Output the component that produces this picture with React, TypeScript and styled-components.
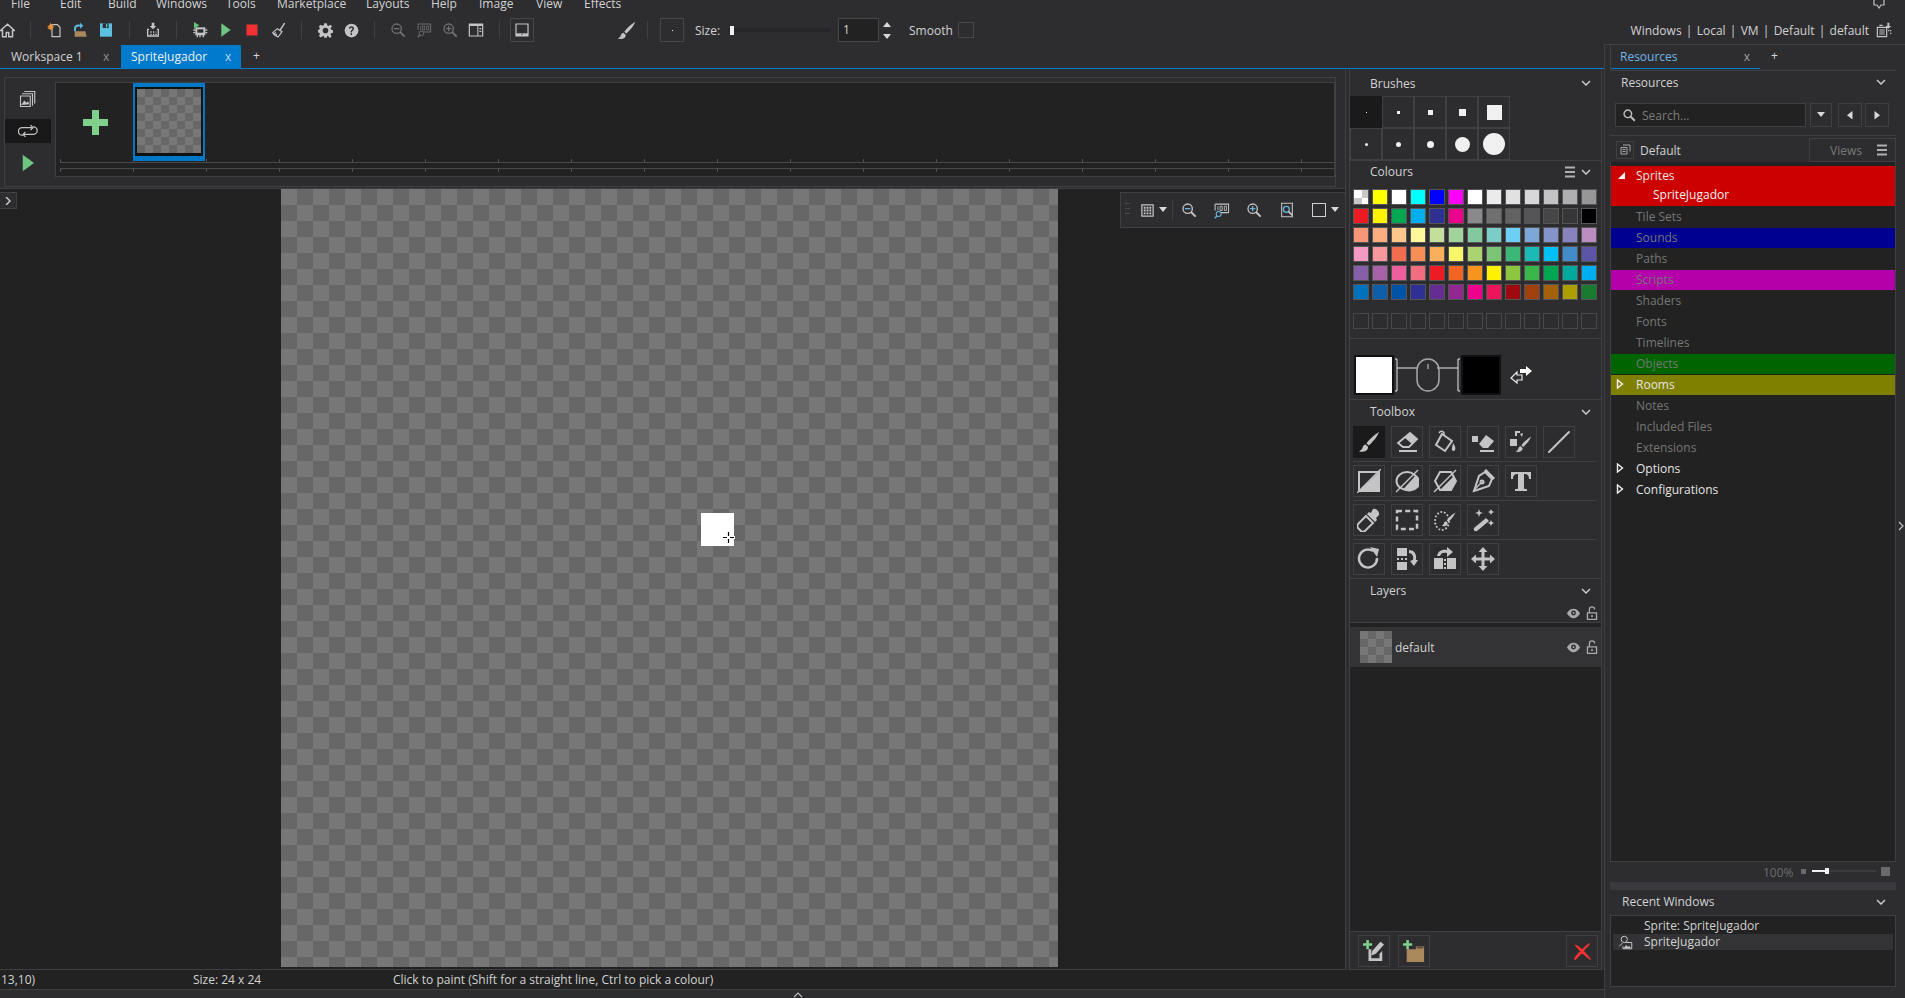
import React from "react";
import styled, { createGlobalStyle } from "styled-components";

const GlobalStyle = createGlobalStyle`
  html, body { margin: 0; padding: 0; background: #2d2d30; overflow: hidden; }
  * { box-sizing: border-box; }
`;

const LINE = "#3f3f44";
const PANEL = "#2d2d30";
const DARK = "#222222";
const TEXT = "#d2d2d2";
const GREY = "#c4c4c4";

const checker = (size: number) => `
  background: conic-gradient(#676767 25%, #777777 0 50%, #676767 0 75%, #777777 0) 0 0 / ${size * 2}px ${size * 2}px;
`;

/* ---------- icons ---------- */

type IconProps = { size?: number; children: React.ReactNode; box?: number };
const Svg = ({ size = 16, box = 24, children }: IconProps) => (
	<svg width={size} height={size} viewBox={`0 0 ${box} ${box}`} style={{ display: "block" }}>
		{children}
	</svg>
);

const BrushShape = ({ fill = GREY }: { fill?: string }) => (
	<path fill={fill} d="M22 2C17 5 12 9.500 9.500 13.500L11.800 15.500C15 12.500 20 7.500 22 2ZM8.500 14.500C5.500 15 6 18 4.500 19.500C3.800 20.200 2.800 20.800 2 21.200C5.500 22.500 11.500 21.500 11 16.800Z" />
);

const MagnifierShape = ({ sign, color = "#6f6f6f", accent = "#6f6f6f" }: { sign: "-" | "+"; color?: string; accent?: string }) => (
	<g fill="none" stroke={color} strokeWidth="2">
		<circle cx="10" cy="10" r="7" />
		<path d="M15 15l7 7" strokeWidth="3" />
		<path d={sign === "-" ? "M6 10h8" : "M6 10h8M10 6v8"} stroke={accent} />
	</g>
);

const Zoom100Shape = ({ color = "#6f6f6f", accent = "#6f6f6f" }: { color?: string; accent?: string }) => (
	<g fill="none" strokeWidth="1.500">
		<path d="M3 3h19v12H11" stroke={color} />
		<path d="M3 3v9" stroke={color} />
		<path d="M7 6v6M10 6h3v6h-3zM16 6h3v6h-3z" stroke={color} strokeWidth="1.200" />
		<circle cx="8" cy="17" r="3.500" stroke={accent} />
		<path d="M5.500 20l-3 3" stroke={accent} strokeWidth="2" />
	</g>
);

const Plus = ({ size = 25 }: { size?: number }) => (
	<svg width={size} height={size} viewBox="0 0 25 25" style={{ display: "block" }}>
		<path fill="#7ed08c" d="M9 0h7v9h9v7h-9v9H9v-9H0V9h9z" />
	</svg>
);

const Eye = () => (
	<Svg size={15} box={16}>
		<path fill="#a8a8a8" d="M1 8C3 4.500 5.500 3 8 3s5 1.500 7 5c-2 3.500-4.500 5-7 5s-5-1.500-7-5z" />
		<circle cx="8" cy="7.500" r="2.600" fill="#2d2d30" />
		<circle cx="8" cy="7.500" r="1" fill="#a8a8a8" />
	</Svg>
);

const Lock = () => (
	<Svg size={14} box={16}>
		<path fill="none" stroke="#a8a8a8" strokeWidth="1.500" d="M5 7V4a3 3 0 0 1 6 0M2.800 7.800h10.400v7.400H2.800z" />
		<rect x="7" y="10.500" width="2" height="2" fill="#a8a8a8" />
	</Svg>
);

const Chevron = () => (
	<svg width="10" height="6" viewBox="0 0 10 6" style={{ display: "block" }}>
		<path d="M1 1l4 4 4-4" fill="none" stroke="#c8c8c8" strokeWidth="1.500" />
	</svg>
);

const Hamburger = () => (
	<svg width="12" height="12" viewBox="0 0 12 12" style={{ display: "block" }}>
		<path d="M1 1.500h10M1 6h10M1 10.500h10" stroke="#b0b0b0" strokeWidth="2" />
	</svg>
);

const Caret = ({ dir = "down" }: { dir?: "down" | "up" | "left" | "right" }) => {
	const d = { down: "M0 1h8L4 6z", up: "M0 6h8L4 1z", left: "M6.500 0v8.500L1 4.250z", right: "M1.500 0v8.500l5.500-4.250z" }[dir];
	return (
		<svg width="8" height="9" viewBox="0 0 8 9" style={{ display: "block" }}>
			<path d={d} fill="#d8d8d8" />
		</svg>
	);
};

const toolbarIcons: Record<string, React.ReactNode> = {
	new: (
		<Svg>
			<path d="M9 4h8l4 4v14H9z" fill="none" stroke={GREY} strokeWidth="1.800" />
			<path d="M7 1l1.200 3 3-1-1.500 3 3 1.500-3 1 1 3-3-1.500L6 13l-.7-3-3.300.5L4 8 1.500 6l3-.5z" fill="#e8913a" />
		</Svg>
	),
	open: (
		<Svg>
			<path d="M4 14h16l2 8H4z" fill="#a9885c" />
			<path d="M3 10c0-5 4-7 9-6V1l5 4.500-5 4.500V7C8 6.500 6 8 6 11v3H3z" fill="#5bb8dc" />
		</Svg>
	),
	save: (
		<Svg>
			<path d="M3 2h18v20H3z" fill="#5cbfe0" />
			<path d="M7 2h9v7H7z" fill="#2d2d30" />
			<path d="M12 3h2v5h-2z" fill="#5cbfe0" />
		</Svg>
	),
	pack: (
		<Svg>
			<path d="M10 1h4v5h3l-5 5-5-5h3z" fill={GREY} />
			<path d="M3 10h3v2H5v8h14v-8h-1v-2h3v12H3z" fill={GREY} />
			<path d="M8 14h2v2H8zM12 14h2v2h-2zM16 14h1v2h-1zM8 17.500h2v2H8zM12 17.500h2v2h-2zM15.500 17.500h2v2h-2z" fill={GREY} />
		</Svg>
	),
	compile: (
		<Svg>
			<path d="M5 8h15v12H5z" fill={GREY} />
			<path d="M8 11h9v5H8z" fill="#2d2d30" />
			<path d="M7 20h2v3H7zM11 20h2v3h-2zM16 20h2v3h-2zM2 11h3v2H2zM2 15h3v2H2zM20 11h3v2h-3zM20 15h3v2h-3z" fill={GREY} />
			<path d="M3 0l8 5-8 5z" fill="#62c47a" />
		</Svg>
	),
	play: (
		<Svg>
			<path d="M5 2l14 10L5 22z" fill="#6fc47f" />
		</Svg>
	),
	clean: (
		<Svg>
			<path d="M21 1l2 1-7 11-2-1z" fill={GREY} />
			<path d="M11 10l7 4.500-2 3-4 5-3-1.500 1-3-2 2-2-1 1.500-2.500-2 1L4 16z" fill="none" stroke={GREY} strokeWidth="1.800" />
		</Svg>
	),
	gear: (
		<Svg size={15}>
			<path fill={GREY} fillRule="evenodd" d="M10 1h4l.7 3.200 2.300 1 2.800-1.800 2.800 2.800L20 9l1 2.300 3 .7v4l-3 .7-1 2.300 1.800 2.800-2.800 2.800L17 22l-2.300-1-.7 3h-4l-.7-3L7 22l-2.800 1.800L1.400 21 3.200 18 2 16l-2-.3v-4l2-.7 1-2.300L1.400 6 4.200 3.200 7 5l2.300-1zM12 8a4.500 4.500 0 1 0 0 9 4.500 4.500 0 0 0 0-9z" transform="translate(0 -0.500)" />
		</Svg>
	),
	help: (
		<Svg size={15}>
			<circle cx="12" cy="12" r="11" fill={GREY} />
			<path d="M8 9c0-5 8-5 8 0 0 3-3.500 3-3.500 6h-2c0-4 3-4 3-6 0-2-3.500-2-3.500 0z" fill="#2d2d30" />
			<path d="M10.500 16.500h2.300V19h-2.300z" fill="#2d2d30" />
		</Svg>
	),
	zoomOut: (
		<Svg>
			<MagnifierShape sign="-" />
		</Svg>
	),
	zoom100: (
		<Svg>
			<Zoom100Shape />
		</Svg>
	),
	zoomIn: (
		<Svg>
			<MagnifierShape sign="+" />
		</Svg>
	),
	panel: (
		<Svg>
			<path d="M2 3h20v18H2z" fill="none" stroke={GREY} strokeWidth="1.800" />
			<path d="M2 3h20v3H2zM14 6h1.500v15H14zM17 9h3v2h-3zM17 13h3v2h-3z" fill={GREY} />
		</Svg>
	),
	tablet: (
		<Svg>
			<path d="M3 3h18v18H3z" fill="none" stroke={GREY} strokeWidth="1.800" />
			<path d="M3 17h18v4H3z" fill={GREY} />
			<path d="M11 18.500h2v1h-2z" fill="#2d2d30" />
		</Svg>
	),
	brush: (
		<Svg size={21}>
			<BrushShape />
		</Svg>
	),
	home: (
		<Svg size={15}>
			<path d="M12 2L1 12h3v10h6v-7h4v7h6V12h3z" fill="none" stroke={GREY} strokeWidth="2.400" />
		</Svg>
	),
};

const toolIcons: Record<string, React.ReactNode> = {
	brush: <BrushShape />,
	eraser: (
		<g fill={GREY}>
			<path d="M15 3l7 6-8 8H8l-5-4z" fill="none" stroke={GREY} strokeWidth="1.800" />
			<path d="M15 3l7 6-5 5-7-6z" />
			<path d="M4 20h18v2H4z" />
		</g>
	),
	fill: (
		<g>
			<path d="M9 4l10 7-7 10-9-6z" fill="none" stroke={GREY} strokeWidth="2" />
			<path d="M6 3c2-3 6-2 5 3" fill="none" stroke={GREY} strokeWidth="1.500" />
			<path d="M20 13c2 3 3 5 2 7s-4 1-3-2z" fill={GREY} />
		</g>
	),
	erasePx: (
		<g fill={GREY}>
			<path d="M1 6h6v6H1z" />
			<path d="M15 5l8 6-6 7h-5l-4-4z" />
			<path d="M9 20h14v2H9z" />
		</g>
	),
	colorBrush: (
		<g fill={GREY}>
			<path d="M1 9h7v7H1z" />
			<path d="M6 1h5v2H8v3H6zM11 4l3-1-1 4z" />
			<g transform="translate(5 5) scale(.78)">
				<BrushShape />
			</g>
		</g>
	),
	line: <path d="M22 2L2 22" stroke={GREY} strokeWidth="2" strokeLinecap="round" />,
	rect: (
		<g>
			<path d="M2 3h20v19H2z" fill="none" stroke={GREY} strokeWidth="2" />
			<path d="M22 3v19H2z" fill={GREY} />
			<path d="M24 0L0 24" stroke={GREY} strokeWidth="1.500" />
		</g>
	),
	ellipse: (
		<g>
			<ellipse cx="12" cy="12" rx="10.500" ry="9" fill="none" stroke={GREY} strokeWidth="2" />
			<path d="M21 6A10.500 9 0 0 1 8 20.500z" fill={GREY} />
			<path d="M23 1L1 23" stroke={GREY} strokeWidth="1.500" />
		</g>
	),
	poly: (
		<g>
			<path d="M7 3h11l5 9-5 9H7l-5-9z" fill="none" stroke={GREY} strokeWidth="2" />
			<path d="M21 7l2 5-5 9H7z" fill={GREY} />
			<path d="M23 1L1 23" stroke={GREY} strokeWidth="1.500" />
		</g>
	),
	pen: (
		<g fill="none" stroke={GREY} strokeWidth="2">
			<path d="M14 3l7 7-3 7-12 4-3 1 1-3 4-12z" />
			<path d="M14 1l9 9" strokeWidth="3" />
			<path d="M3 21l7-7" strokeWidth="1.500" />
			<circle cx="11" cy="13" r="1.500" />
		</g>
	),
	text: <path fill={GREY} d="M2 3h20v7h-2c0-3-1-5-5-5v14c0 1 1 1 3 1v2H6v-2c2 0 3 0 3-1V5c-4 0-5 2-5 5H2z" />,
	picker: (
		<g fill={GREY}>
			<path d="M16 1c3-1 7 3 6 6l-3 3 1 2-2 2-8-8 2-2 2 1z" />
			<path d="M9 8l7 7-8 8c-2 1-3 1-4 0l-3-3c-1-1-1-2 0-4z" fill="none" stroke={GREY} strokeWidth="2" />
		</g>
	),
	select: <path d="M2 3h20v18H2z" fill="none" stroke={GREY} strokeWidth="2.500" strokeDasharray="5 3.200" />,
	lasso: (
		<g>
			<ellipse cx="9" cy="13" rx="7" ry="9" fill="none" stroke={GREY} strokeWidth="1.800" strokeDasharray="1.800 1.800" />
			<g transform="translate(7 3) scale(.7)">
				<BrushShape />
			</g>
		</g>
	),
	wand: (
		<g fill={GREY}>
			<path d="M15 10l3 3L6 23c-2 1-4-1-3-3z" />
			<path d="M8 1l1 3 3 1-3 1-1 3-1-3-3-1 3-1zM20 1l1 2 2 1-2 1-1 2-1-2-2-1 2-1zM20 12l1 2 2 1-2 1-1 2-1-2-2-1 2-1z" />
		</g>
	),
	rotate: (
		<g>
			<path d="M20 11a9 9 0 1 1-4-7" fill="none" stroke={GREY} strokeWidth="2.500" />
			<path d="M13 0l9 2-2 8z" fill={GREY} />
		</g>
	),
	flipV: (
		<g fill={GREY}>
			<path d="M2 1h10v8H2zM2 15h10v8H2z" />
			<path d="M2 11h2v2H2zM6 11h2v2H6zM10 11h2v2h-2z" />
			<path d="M14 3c5 0 8 4 7 10l2 0-4 6-4-5 3-1c1-4-1-7-4-7z" />
		</g>
	),
	flipH: (
		<g fill={GREY}>
			<path d="M1 11h9v11H1zM14 11h9v11h-9z" />
			<path d="M11 12h2v2h-2zM11 16h2v2h-2zM11 20h2v2h-2z" fill={GREY} />
			<path d="M4 9c1-5 5-7 10-6V0l6 5-6 5V6c-4-1-6 0-7 3z" />
		</g>
	),
	move: <path fill={GREY} d="M12 0l4.500 5H13.500v5.500H19V7.500l5 4.500-5 4.500v-3h-5.500V19h3L12 24l-4.500-5h3v-5.500H5v3L0 12l5-4.500v3h5.500V5h-3z" />,
};

/* ---------- data ---------- */

const menus = [
	["File", 49],
	["Edit", 48],
	["Build", 48],
	["Windows", 70],
	["Tools", 51],
	["Marketplace", 89],
	["Layouts", 65],
	["Help", 48],
	["Image", 57],
	["View", 48],
	["Effects", 60],
] as const;

const swatches = [
	["check", "#ffff00", "#ffffff", "#00ffff", "#0000ff", "#ff00ff", "#ffffff", "#ebebeb", "#e1e1e1", "#d7d7d7", "#c3c3c3", "#afafaf", "#969696"],
	["#ed1c24", "#fff200", "#00a651", "#00aeef", "#2e3192", "#ec008c", "#898989", "#707070", "#636363", "#555555", "#464646", "#363636", "#000000"],
	["#f7977a", "#f9ad81", "#fdc68a", "#fff79a", "#c4df9b", "#a2d39c", "#82ca9d", "#7bcdc8", "#6ecff6", "#7ea7d8", "#8493ca", "#8882be", "#bc8dbf"],
	["#f49ac2", "#f6989d", "#f26c4f", "#f68e55", "#fbaf5c", "#f7f568", "#acd372", "#7cc576", "#3bb878", "#1abbb4", "#00bff3", "#438cca", "#5c54a4"],
	["#855fa8", "#a763a8", "#ee609d", "#f26d7d", "#ed1c24", "#f26522", "#f7941d", "#fff200", "#8dc63f", "#39b54a", "#00a651", "#00a99d", "#00aeef"],
	["#0072bc", "#0f5fa8", "#0054a6", "#2e3192", "#662d91", "#92278f", "#ec008c", "#ed145b", "#9e0b0f", "#a0410d", "#a36209", "#aba000", "#1a7b30"],
];

const toolRows = [
	["brush", "eraser", "fill", "erasePx", "colorBrush", "line"],
	["rect", "ellipse", "poly", "pen", "text"],
	["picker", "select", "lasso", "wand"],
	["rotate", "flipV", "flipH", "move"],
];

const brushes = [
	[1, 3, 5, 7, 15].map(size => ({ size, round: false })),
	[3, 5, 7, 15, 22].map(size => ({ size, round: true })),
];

const tree = [
	{ name: "Sprites", open: true, bg: "#cc0000", child: "SpriteJugador" },
	{ name: "Tile Sets" },
	{ name: "Sounds", bg: "#000090" },
	{ name: "Paths" },
	{ name: "Scripts", bg: "#b400aa" },
	{ name: "Shaders" },
	{ name: "Fonts" },
	{ name: "Timelines" },
	{ name: "Objects", bg: "#006400" },
	{ name: "Rooms", bg: "#808000", has: true },
	{ name: "Notes" },
	{ name: "Included Files" },
	{ name: "Extensions" },
	{ name: "Options", has: true },
	{ name: "Configurations", has: true },
];

/* ---------- app ---------- */

export default function App() {
	return (
		<Page>
			<GlobalStyle />
			<MenuBar>
				{menus.map(([label, width]) => (
					<MenuItem key={label} style={{ width }}>
						{label}
					</MenuItem>
				))}
				<NoticeIcon>
					<svg width="12" height="12" viewBox="0 0 12 12">
						<path d="M1 0v8h3l2 3 2-3h3V0" fill="none" stroke="#c0c0c0" strokeWidth="1.200" />
					</svg>
				</NoticeIcon>
			</MenuBar>

			<Toolbar>
				<ToolSlot $width={20} $start>{toolbarIcons.home}</ToolSlot>
				<Sep />
				<ToolSlot>{toolbarIcons.new}</ToolSlot>
				<ToolSlot>{toolbarIcons.open}</ToolSlot>
				<ToolSlot>{toolbarIcons.save}</ToolSlot>
				<Sep />
				<ToolSlot>{toolbarIcons.pack}</ToolSlot>
				<Sep />
				<ToolSlot>{toolbarIcons.compile}</ToolSlot>
				<ToolSlot>{toolbarIcons.play}</ToolSlot>
				<ToolSlot>
					<Svg size={12}>
						<path d="M1 1h22v22H1z" fill="#f23232" />
					</Svg>
				</ToolSlot>
				<ToolSlot>{toolbarIcons.clean}</ToolSlot>
				<Sep />
				<ToolSlot>{toolbarIcons.gear}</ToolSlot>
				<ToolSlot>{toolbarIcons.help}</ToolSlot>
				<Sep />
				<ToolSlot>{toolbarIcons.zoomOut}</ToolSlot>
				<ToolSlot>{toolbarIcons.zoom100}</ToolSlot>
				<ToolSlot>{toolbarIcons.zoomIn}</ToolSlot>
				<ToolSlot>{toolbarIcons.panel}</ToolSlot>
				<Sep />
				<BoxedIcon>{toolbarIcons.tablet}</BoxedIcon>
				<BrushSlot>{toolbarIcons.brush}</BrushSlot>
				<BrushSep />
				<BrushPreview>
					<Dot $size={1} />
				</BrushPreview>
				<SizeLabel>Size:</SizeLabel>
				<SizeSlider>
					<SizeThumb />
				</SizeSlider>
				<SizeInput>1</SizeInput>
				<Spinner>
					<Caret dir="up" />
					<Caret dir="down" />
				</Spinner>
				<SmoothLabel>Smooth</SmoothLabel>
				<SmoothCheck />
				<Targets>Windows&nbsp; |&nbsp; Local&nbsp; |&nbsp; VM&nbsp; |&nbsp; Default&nbsp; |&nbsp; default</Targets>
				<TargetIcon>
					<Svg size={16}>
						<path d="M2 8h14v14H2zM5 5h5" fill="none" stroke={GREY} strokeWidth="1.800" />
						<path d="M5 12h8M5 15h8M5 18h8" stroke={GREY} strokeWidth="1.500" />
						<path d="M17 1h3v5h3l-4.500 4L14 6h3zM18 12h2v2h-2zM21 12h2v2h-2zM21 16h2v2h-2z" fill={GREY} />
					</Svg>
				</TargetIcon>
			</Toolbar>

			<Workspace>
				<LeftColumn>
					<TabBar>
						<Tab>
							<TabLabel>Workspace 1</TabLabel>
							<TabClose>x</TabClose>
						</Tab>
						<Tab $active>
							<TabLabel>SpriteJugador</TabLabel>
							<TabClose $active>x</TabClose>
						</Tab>
						<TabAdd>+</TabAdd>
					</TabBar>

					<Body>
						<EditorColumn>
							<FramesPanel>
								<FramesBox>
									<FrameModes>
										<FrameMode>
											<Svg size={18}>
												<path d="M7 2h14v16M4 5h14v16" fill="none" stroke={GREY} strokeWidth="1.500" />
												<path d="M2 8h13v14H2z" fill="#2d2d30" stroke={GREY} strokeWidth="1.500" />
												<path d="M3 20l4-6 3 3 2-2 2 4z" fill={GREY} />
											</Svg>
										</FrameMode>
										<FrameMode $active>
											<Svg size={20}>
												<path d="M6 17H5a4 4 0 0 1 0-9h13M18 8l-3-3M18 8l-3 3M18 7a4 4 0 0 1 1 9H6M6 16l3-3M6 16l3 3" fill="none" stroke={GREY} strokeWidth="1.500" />
											</Svg>
										</FrameMode>
										<FrameMode>
											<Svg size={18}>
												<path d="M5 1l15 11L5 23z" fill="#6fc47f" />
											</Svg>
										</FrameMode>
									</FrameModes>
									<FrameStrip>
										<ThumbRow>
											<AddFrame>
												<Plus />
											</AddFrame>
											<FrameThumb>
												<FrameInner>
													<FrameChecker />
												</FrameInner>
											</FrameThumb>
										</ThumbRow>
										<Ruler />
									</FrameStrip>
								</FramesBox>
							</FramesPanel>

							<CanvasArea>
								<CollapseButton>
									<svg width="6" height="8" viewBox="0 0 6 8">
										<path d="M1 0l4 4-4 4" fill="none" stroke="#d0d0d0" strokeWidth="1.400" />
									</svg>
								</CollapseButton>
								<SpriteCanvas>
									<Pixel />
									<Cursor>
										<svg width="13" height="13" viewBox="0 0 13 13">
											<path d="M6.500 0v5M6.500 8v5M0 6.500h5M8 6.500h5" stroke="#fff" strokeWidth="3" />
											<path d="M6.500 1v4M6.500 8v4M1 6.500h4M8 6.500h4" stroke="#000" strokeWidth="1.200" />
										</svg>
									</Cursor>
								</SpriteCanvas>
								<ZoomBar>
									<Grip />
									<GridSlot $width={20}>
										<Svg size={15}>
											<path d="M3 3h18v18H3z" fill="none" stroke={GREY} strokeWidth="2" />
											<path d="M6 6h3v3H6zM10.500 6h3v3h-3zM15 6h3v3h-3zM6 10.500h3v3H6zM10.500 10.500h3v3h-3zM15 10.500h3v3h-3zM6 15h3v3H6zM10.500 15h3v3h-3zM15 15h3v3h-3z" fill={GREY} />
										</Svg>
									</GridSlot>
									<Caret />
									<ZoomSep />
									<ZoomSlot>
										<Svg size={16}>
											<MagnifierShape sign="-" color={GREY} accent="#69b4dc" />
										</Svg>
									</ZoomSlot>
									<ZoomSlot>
										<Svg size={17}>
											<Zoom100Shape color={GREY} accent="#69b4dc" />
										</Svg>
									</ZoomSlot>
									<ZoomSlot>
										<Svg size={16}>
											<MagnifierShape sign="+" color={GREY} accent="#69b4dc" />
										</Svg>
									</ZoomSlot>
									<ZoomSlot>
										<Svg size={16}>
											<path d="M3 2h18M3 22h18M4 2v20M20 2v20" fill="none" stroke={GREY} strokeWidth="1.600" />
											<circle cx="11" cy="11" r="4.500" fill="none" stroke="#69b4dc" strokeWidth="2" />
											<path d="M14 14l6 6" stroke={GREY} strokeWidth="2.500" />
										</Svg>
									</ZoomSlot>
									<RectSlot $width={24}>
										<RectTool />
									</RectSlot>
									<Caret />
								</ZoomBar>
							</CanvasArea>
						</EditorColumn>

						<ToolColumn>
							<ToolPanel>
								<SectionHead $height={27} $padTop={1}>
									<span>Brushes</span>
									<Chevron />
								</SectionHead>
								<BrushGrid>
									{brushes.flat().map((b, i) => (
										<BrushCell key={i} $active={i === 0}>
											<Dot $size={b.size} $round={b.round} />
										</BrushCell>
									))}
								</BrushGrid>
								<SectionHead $height={29} $padBottom={7} $line>
									<span>Colours</span>
									<HeadTools>
										<Hamburger />
										<Chevron />
									</HeadTools>
								</SectionHead>
								<SwatchGrid>
									{swatches.flat().map((c, i) => (
										<Swatch key={i} $color={c} />
									))}
								</SwatchGrid>
								<BlankRow>
									{Array.from({ length: 13 }, (_, i) => (
										<BlankSwatch key={i} />
									))}
								</BlankRow>
								<ColourPick>
									<BigSwatch $color="#ffffff" />
									<MouseDiagram>
										<svg width="67" height="40" viewBox="0 0 67 40">
											<path d="M1 4h2v32H1M3 13h21M43 13h21M66 4h-2v32h2" fill="none" stroke="#e8e8e8" strokeWidth="1" />
											<rect x="23" y="4" width="22" height="32" rx="11" fill="none" stroke="#a8a8a8" strokeWidth="1.500" />
											<path d="M34 9v5" stroke="#b8b8b8" strokeWidth="1.200" />
										</svg>
									</MouseDiagram>
									<BigSwatch $color="#000000" />
									<SwapIcon>
										<svg width="22" height="18" viewBox="0 0 22 18">
											<path d="M10 3h6V0l6 5-6 5V7h-6z" fill="#fff" />
											<path d="M12 9H7V6L1 12l6 5v-3h5z" fill="none" stroke="#e8e8e8" strokeWidth="1.200" />
										</svg>
									</SwapIcon>
								</ColourPick>
								<SectionHead $height={27} $padBottom={3} $line>
									<span>Toolbox</span>
									<Chevron />
								</SectionHead>
								{toolRows.map((row, r) => (
									<ToolRow key={r} $last={r === toolRows.length - 1}>
										{row.map(t => (
											<ToolButton key={t} $active={t === "brush" && r === 0}>
												<Svg size={24}>{toolIcons[t]}</Svg>
											</ToolButton>
										))}
									</ToolRow>
								))}
								<SectionHead $height={26} $padBottom={2} $line>
									<span>Layers</span>
									<Chevron />
								</SectionHead>
								<LayerIcons>
									<Eye />
									<Lock />
								</LayerIcons>
								<LayerList>
									<LayerRow>
										<LayerThumb />
										<LayerName>default</LayerName>
										<LayerIcons $inRow>
											<Eye />
											<Lock />
										</LayerIcons>
									</LayerRow>
								</LayerList>
								<LayerFooter>
									<FooterButton>
										<Svg size={22}>
											<path d="M6 10v13h15V12l-3 3v5H9V10z" fill={GREY} />
											<path d="M19 2l4 3-9 10-5 2 1-5z" fill={GREY} />
											<g transform="scale(.4)">
												<path fill="#7ed08c" d="M9 0h7v9h9v7h-9v9H9v-9H0V9h9z" />
											</g>
										</Svg>
									</FooterButton>
									<FooterButton>
										<Svg size={22}>
											<path d="M4 10h10V7h9v17H4z" fill="#a9885c" />
											<path d="M15 8.500h7" stroke="#2d2d30" strokeWidth="1" />
											<g transform="scale(.4)">
												<path fill="#7ed08c" d="M9 0h7v9h9v7h-9v9H9v-9H0V9h9z" />
											</g>
										</Svg>
									</FooterButton>
									<FooterButton $end>
										<Svg size={19}>
											<path d="M3 4c6 3 11 8 19 18C15 17 10 13 3 4zM21 2C16 8 10 14 3 22l-1-1C8 13 14 7 21 2z" fill="#f23232" stroke="#f23232" strokeWidth="1.600" />
										</Svg>
									</FooterButton>
								</LayerFooter>
							</ToolPanel>
						</ToolColumn>
					</Body>

					<StatusBar>
						<span>13,10)</span>
						<span>Size: 24 x 24</span>
						<span>Click to paint (Shift for a straight line, Ctrl to pick a colour)</span>
					</StatusBar>
					<BottomBand>
						<svg width="10" height="6" viewBox="0 0 10 6">
							<path d="M1 5l4-4 4 4" fill="none" stroke="#bbb" strokeWidth="1.200" />
						</svg>
					</BottomBand>
				</LeftColumn>

				<ResourcePanel>
					<ResTabs>
						<ResTab>
							<span>Resources</span>
							<ResTabClose>x</ResTabClose>
						</ResTab>
						<TabAdd $res>+</TabAdd>
					</ResTabs>
					<ResHead>
						<span>Resources</span>
						<Chevron />
					</ResHead>
					<SearchRow>
						<SearchBox>
							<Svg size={14}>
								<circle cx="10" cy="10" r="6.500" fill="none" stroke="#bdbdbd" strokeWidth="2.400" />
								<path d="M15 15l7 7" stroke="#bdbdbd" strokeWidth="3.500" />
							</Svg>
							<span>Search...</span>
						</SearchBox>
						<SearchButton $width={22} $gap={4}>
							<Caret />
						</SearchButton>
						<SearchButton $width={24} $gap={6}>
							<Caret dir="left" />
						</SearchButton>
						<SearchButton $width={24} $gap={3}>
							<Caret dir="right" />
						</SearchButton>
					</SearchRow>
					<ViewRow>
						<ViewIcon>
							<Svg size={12}>
								<path d="M8 2h14v13M4 7h12v13H4zM7 11h6M7 15h6" fill="none" stroke="#a8a8a8" strokeWidth="2" />
							</Svg>
						</ViewIcon>
						<ViewName>Default</ViewName>
						<ViewsBox>
							<span>Views</span>
							<Hamburger />
						</ViewsBox>
					</ViewRow>
					<Tree>
						{tree.map(item => (
							<TreeGroup key={item.name} $bg={item.bg}>
								<TreeRow $dim={!item.open && !item.has}>
									<TreeArrow>
										{item.open && (
											<svg width="10" height="10" viewBox="0 0 10 10">
												<path d="M9 2v7H2z" fill="#fff" />
											</svg>
										)}
										{item.has && (
											<svg width="8" height="10" viewBox="0 0 8 10">
												<path d="M1.500 1v8l5-4z" fill="none" stroke="#f0f0f0" strokeWidth="1.400" />
											</svg>
										)}
									</TreeArrow>
									{item.name}
								</TreeRow>
								{item.child && <TreeChild>{item.child}</TreeChild>}
							</TreeGroup>
						))}
					</Tree>
					<ZoomRow>
						<ZoomValue>100%</ZoomValue>
						<MiniSquare $size={5} />
						<MiniTrack>
							<MiniThumb />
						</MiniTrack>
						<MiniSquare $size={9} />
					</ZoomRow>
					<Band />
					<RecentHead>
						<span>Recent Windows</span>
						<Chevron />
					</RecentHead>
					<RecentList>
						<RecentRow>Sprite: SpriteJugador</RecentRow>
						<RecentRow $active>
							<RecentIcon>
								<Svg size={15}>
									<circle cx="10" cy="7" r="5" fill="none" stroke={GREY} strokeWidth="1.600" />
									<path d="M2 18l5-5M12 12h10v10H8v-4" fill="none" stroke={GREY} strokeWidth="1.600" />
									<path d="M9 21l4-5 3 3 2-2 3 4z" fill={GREY} />
								</Svg>
							</RecentIcon>
							SpriteJugador
						</RecentRow>
					</RecentList>
					<SideCaret>
						<svg width="6" height="10" viewBox="0 0 6 10">
							<path d="M1 1l4 4-4 4" fill="none" stroke="#c0c0c0" strokeWidth="1.300" />
						</svg>
					</SideCaret>
				</ResourcePanel>
			</Workspace>
		</Page>
	);
}

/* ---------- styles ---------- */

const Page = styled.div`
	width: 1905px;
	height: 998px;
	overflow: hidden;
	display: flex;
	flex-direction: column;
	background: ${PANEL};
	color: ${TEXT};
	font-family: "Open Sans", "Liberation Sans", sans-serif;
	font-size: 12px;
`;

const MenuBar = styled.div`
	position: relative;
	flex: none;
	height: 22px;
	margin-top: -8px;
	padding-left: 11px;
	display: flex;
	align-items: center;
	font-size: 12px;
`;

const MenuItem = styled.div`
	flex: none;
`;

const NoticeIcon = styled.div`
	position: absolute;
	right: 20px;
	top: 4px;
`;

const Toolbar = styled.div`
	flex: none;
	height: 30px;
	padding-top: 2px;
	display: flex;
	align-items: center;
`;

const ToolSlot = styled.div<{ $width?: number; $start?: boolean }>`
	flex: none;
	width: ${p => p.$width ?? 26}px;
	display: flex;
	justify-content: ${p => (p.$start ? "flex-start" : "center")};
`;

const Sep = styled.div`
	flex: none;
	width: 1px;
	height: 18px;
	margin: 0 10px;
	background: ${LINE};
`;

const BoxedIcon = styled.div`
	flex: none;
	width: 24px;
	height: 24px;
	border: 1px solid #45454a;
	display: flex;
	align-items: center;
	justify-content: center;
`;

const BrushSlot = styled(ToolSlot)`
	margin-left: 79px;
`;

const BrushSep = styled.div`
	flex: none;
	width: 1px;
	height: 18px;
	margin: 0 12px 0 8px;
	background: ${LINE};
`;

const BrushPreview = styled.div`
	flex: none;
	width: 24px;
	height: 24px;
	border: 1px solid #45454a;
	display: flex;
	align-items: center;
	justify-content: center;
`;

const Dot = styled.div<{ $size: number; $round?: boolean }>`
	width: ${p => p.$size}px;
	height: ${p => p.$size}px;
	background: #f0f0f0;
	border-radius: ${p => (p.$round ? "50%" : "0")};
`;

const SizeLabel = styled.div`
	flex: none;
	margin-left: 11px;
	width: 32px;
`;

const SizeSlider = styled.div`
	flex: none;
	width: 103px;
	height: 4px;
	margin-left: 1px;
	background: #262628;
	position: relative;
`;

const SizeThumb = styled.div`
	position: absolute;
	left: 2px;
	top: -2px;
	width: 4px;
	height: 9px;
	background: #f0f0f0;
`;

const SizeInput = styled.div`
	flex: none;
	width: 41px;
	height: 24px;
	margin-left: 7px;
	padding-left: 4px;
	line-height: 22px;
	background: ${DARK};
	border: 1px solid #45454a;
`;

const Spinner = styled.div`
	flex: none;
	width: 8px;
	margin-left: 4px;
	height: 24px;
	display: flex;
	flex-direction: column;
	justify-content: space-between;
	padding: 3px 0 0;
`;

const SmoothLabel = styled.div`
	flex: none;
	margin-left: 18px;
	width: 49px;
`;

const SmoothCheck = styled.div`
	flex: none;
	width: 16px;
	height: 16px;
	border: 1px solid #45454a;
`;

const Targets = styled.div`
	flex: none;
	margin-left: auto;
	white-space: nowrap;
	word-spacing: -1px;
`;

const TargetIcon = styled.div`
	flex: none;
	margin: 0 13px 0 7px;
`;

const Workspace = styled.div`
	flex: 1;
	min-height: 0;
	display: flex;
`;

const LeftColumn = styled.div`
	flex: none;
	width: 1604px;
	display: flex;
	flex-direction: column;
	padding-top: 1px;
`;

const TabBar = styled.div`
	flex: none;
	height: 24px;
	display: flex;
	border-bottom: 1px solid #007acc;
	background: ${PANEL};
`;

const Tab = styled.div<{ $active?: boolean }>`
	flex: none;
	width: ${p => (p.$active ? 120 : 121)}px;
	display: flex;
	align-items: center;
	padding-left: ${p => (p.$active ? 10 : 11)}px;
	background: ${p => (p.$active ? "#007acc" : "transparent")};
	color: ${p => (p.$active ? "#f0f0f0" : TEXT)};
`;

const TabLabel = styled.span`
	flex: 1;
`;

const TabClose = styled.span<{ $active?: boolean }>`
	width: 9px;
	margin-right: ${p => (p.$active ? 7 : 9)}px;
	color: ${p => (p.$active ? "#bcd8ee" : "#909090")};
	font-size: 12px;
`;

const TabAdd = styled.div<{ $res?: boolean }>`
	flex: none;
	margin-left: ${p => (p.$res ? 11 : 12)}px;
	line-height: 22px;
	font-size: 12px;
	color: #d8d8d8;
`;

const Body = styled.div`
	flex: 1;
	min-height: 0;
	display: flex;
`;

const EditorColumn = styled.div`
	flex: none;
	width: 1345px;
	display: flex;
	flex-direction: column;
`;

const FramesPanel = styled.div`
	flex: none;
	height: 120px;
	padding: 8px 9px 1px 4px;
	background: ${PANEL};
	border-bottom: 1px solid ${LINE};
`;

const FramesBox = styled.div`
	height: 110px;
	padding-top: 4px;
	display: flex;
	border: 1px solid ${LINE};
`;

const FrameModes = styled.div`
	flex: none;
	width: 50px;
	padding-top: 5px;
	display: flex;
	flex-direction: column;
	gap: 8px;
`;

const FrameMode = styled.div<{ $active?: boolean }>`
	width: 46px;
	height: 24px;
	display: flex;
	align-items: center;
	justify-content: center;
	background: ${p => (p.$active ? "#181818" : "transparent")};
`;

const FrameStrip = styled.div`
	flex: 1;
	height: 95px;
	background: ${DARK};
	border: 1px solid ${LINE};
	overflow: hidden;
`;

const ThumbRow = styled.div`
	position: relative;
	z-index: 1;
	height: 79px;
	display: flex;
`;

const AddFrame = styled.div`
	flex: none;
	width: 77px;
	height: 78px;
	padding-left: 1px;
	display: flex;
	align-items: center;
	justify-content: center;
`;

const FrameThumb = styled.div`
	flex: none;
	width: 72px;
	height: 78px;
	padding: 4px 2px 5px;
	background: #0078c8;
`;

const FrameInner = styled.div`
	height: 69px;
	padding: 2px;
	background: #111111;
`;

const FrameChecker = styled.div`
	width: 64px;
	height: 64px;
	${checker(8)}
`;

const Ruler = styled.div`
	height: 13px;
	margin: -3px 0 0 4px;
	background:
		linear-gradient(90deg, #505050 1px, transparent 1px) 0 0 / 73px 3px repeat-x,
		linear-gradient(#4a4a4a, #4a4a4a) 0 3px / 100% 1px no-repeat,
		linear-gradient(#4a4a4a, #4a4a4a) 0 9px / 100% 1px no-repeat,
		linear-gradient(90deg, #505050 1px, transparent 1px) 0 10px / 73px 3px repeat-x;
`;

const CanvasArea = styled.div`
	flex: 1;
	min-height: 0;
	position: relative;
	padding: 0 0 3px 281px;
	background: #212121;
	border-bottom: 1px solid ${LINE};
`;

const CollapseButton = styled.div`
	position: absolute;
	left: 0;
	top: 3px;
	width: 17px;
	height: 17px;
	display: flex;
	align-items: center;
	justify-content: center;
	background: ${PANEL};
	border: 1px solid ${LINE};
	border-left: 0;
`;

const SpriteCanvas = styled.div`
	position: relative;
	width: 777px;
	height: 778px;
	${checker(16)}
`;

const Pixel = styled.div`
	position: absolute;
	left: 420px;
	top: 324px;
	width: 33px;
	height: 33px;
	background: #ffffff;
`;

const Cursor = styled.div`
	position: absolute;
	left: 441px;
	top: 342px;
	line-height: 0;
`;

const ZoomBar = styled.div`
	position: absolute;
	right: 0;
	top: 3px;
	width: 225px;
	height: 36px;
	padding-left: 4px;
	display: flex;
	align-items: center;
	background: ${PANEL};
	border: 1px solid ${LINE};
	border-right: 0;
`;

const Grip = styled.div`
	flex: none;
	width: 5px;
	height: 14px;
	margin-right: 7px;
	background: repeating-linear-gradient(#4a4a4a 0 1px, transparent 1px 5px);
`;

const ZoomSlot = styled.div<{ $width?: number }>`
	flex: none;
	width: ${p => p.$width ?? 32.500}px;
	display: flex;
	justify-content: center;
`;

const GridSlot = styled(ZoomSlot)`
	margin-right: 2px;
`;

const RectSlot = styled(ZoomSlot)`
	margin-left: 4px;
`;

const ZoomSep = styled.div`
	flex: none;
	width: 1px;
	height: 20px;
	margin: 0 0 0 5px;
	background: ${LINE};
`;

const RectTool = styled.div`
	width: 14px;
	height: 14px;
	border: 1.500px solid #d0d0d0;
`;

const ToolColumn = styled.div`
	flex: none;
	width: 259px;
	padding-left: 3px;
	padding-right: 2px;
	background: ${PANEL};
	border-left: 1px solid ${LINE};
`;

const ToolPanel = styled.div`
	height: 100%;
	display: flex;
	flex-direction: column;
	border-left: 1px solid ${LINE};
	border-right: 1px solid ${LINE};
`;

const SectionHead = styled.div<{ $height: number; $line?: boolean; $padTop?: number; $padBottom?: number }>`
	flex: none;
	height: ${p => p.$height}px;
	padding: ${p => p.$padTop ?? 0}px 10px ${p => p.$padBottom ?? 0}px 20px;
	display: flex;
	align-items: center;
	justify-content: space-between;
	border-top: ${p => (p.$line ? `1px solid ${LINE}` : "0")};
`;

const HeadTools = styled.div`
	display: flex;
	align-items: center;
	gap: 5px;
`;

const BrushGrid = styled.div`
	flex: none;
	display: grid;
	grid-template-columns: repeat(5, 32px);
	grid-auto-rows: 32px;
	height: 64px;
`;

const BrushCell = styled.div<{ $active?: boolean }>`
	display: flex;
	align-items: center;
	justify-content: center;
	background: ${p => (p.$active ? "#1a1a1a" : "transparent")};
	border: 1px solid ${p => (p.$active ? "#1a1a1a" : LINE)};
`;

const SwatchGrid = styled.div`
	flex: none;
	display: grid;
	grid-template-columns: repeat(13, 16px);
	grid-auto-rows: 16px;
	gap: 3px;
	padding-left: 3px;
`;

const Swatch = styled.div<{ $color: string }>`
	border: 1px solid #555558;
	${p =>
		p.$color === "check"
			? "background: conic-gradient(#c8c8c8 25%, #fff 0 50%, #c8c8c8 0 75%, #fff 0) 0 0 / 16px 16px;"
			: `background: ${p.$color};`}
`;

const BlankRow = styled(SwatchGrid)`
	margin-top: 13px;
	height: 25px;
`;

const BlankSwatch = styled.div`
	border: 1px solid #48484c;
`;

const ColourPick = styled.div`
	flex: none;
	height: 61px;
	padding: 16px 0 0 4px;
	border-top: 1px solid ${LINE};
	display: flex;
	align-items: flex-start;
`;

const BigSwatch = styled.div<{ $color: string }>`
	flex: none;
	width: 40px;
	height: 40px;
	background: ${p => p.$color};
	border: 2px solid #111111;
`;

const MouseDiagram = styled.div`
	flex: none;
	width: 67px;
	height: 40px;
	line-height: 0;
`;

const SwapIcon = styled.div`
	flex: none;
	margin: 11px 0 0 9px;
	line-height: 0;
`;

const ToolRow = styled.div<{ $last?: boolean }>`
	flex: none;
	margin: 0 5px ${p => (p.$last ? 0 : 3)}px 3px;
	padding-bottom: 3px;
	display: flex;
	gap: 6px;
	border-bottom: ${p => (p.$last ? "0" : `1px solid ${LINE}`)};
`;

const ToolButton = styled.div<{ $active?: boolean }>`
	flex: none;
	width: 32px;
	height: 32px;
	display: flex;
	align-items: center;
	justify-content: center;
	border: 1px solid ${p => (p.$active ? "#1a1a1a" : LINE)};
	background: ${p => (p.$active ? "#1a1a1a" : "transparent")};
`;

const LayerIcons = styled.div<{ $inRow?: boolean }>`
	flex: none;
	height: ${p => (p.$inRow ? "auto" : "18px")};
	margin-left: auto;
	padding-right: 2px;
	display: flex;
	align-items: center;
	gap: 4px;
`;

const LayerList = styled.div`
	flex: 1;
	min-height: 0;
	padding-top: 4px;
	background: ${DARK};
	border: 1px solid ${LINE};
	border-left: 0;
	border-right: 0;
`;

const LayerRow = styled.div`
	height: 40px;
	padding-left: 10px;
	display: flex;
	align-items: center;
	background: #333335;
`;

const LayerThumb = styled.div`
	flex: none;
	width: 32px;
	height: 32px;
	${checker(8)}
`;

const LayerName = styled.div`
	margin-left: 3px;
`;

const LayerFooter = styled.div`
	flex: none;
	height: 38px;
	padding: 3px 3px 0 8px;
	display: flex;
	gap: 8px;
	border-bottom: 1px solid ${LINE};
`;

const FooterButton = styled.div<{ $end?: boolean }>`
	flex: none;
	width: 32px;
	height: 32px;
	margin-left: ${p => (p.$end ? "auto" : "0")};
	display: flex;
	align-items: center;
	justify-content: center;
	border: 1px solid ${LINE};
`;

const StatusBar = styled.div`
	flex: none;
	height: 20px;
	display: grid;
	grid-template-columns: 192px 200px 1fr;
	align-items: center;
	padding-left: 1px;
	background: ${DARK};
	border-bottom: 1px solid ${LINE};
`;

const BottomBand = styled.div`
	flex: none;
	height: 8px;
	padding: 2px 0 0 793px;
	line-height: 0;
`;

const ResourcePanel = styled.div`
	position: relative;
	flex: none;
	width: 301px;
	padding: 0 9px 0 5px;
	display: flex;
	flex-direction: column;
	border-top: 1px solid ${LINE};
	border-left: 1px solid ${LINE};
`;

const ResTabs = styled.div`
	flex: none;
	height: 26px;
	display: flex;
	border-bottom: 1px solid ${LINE};
	border-left: 1px solid ${LINE};
`;

const ResTab = styled.div`
	flex: none;
	width: 149px;
	height: 24px;
	padding: 0 9px;
	display: flex;
	align-items: center;
	justify-content: space-between;
	color: #6db5e8;
	border-bottom: 1px solid #007acc;
`;

const ResTabClose = styled.span`
	color: #a0a0a0;
	margin-right: 1px;
`;

const ResHead = styled.div`
	flex: none;
	height: 32px;
	padding: 0 10px 10px 11px;
	display: flex;
	align-items: center;
	justify-content: space-between;
`;

const SearchRow = styled.div`
	flex: none;
	height: 33px;
	padding: 0 0 9px 5px;
	display: flex;
	border-bottom: 1px solid ${LINE};
`;

const SearchBox = styled.div`
	flex: none;
	width: 191px;
	height: 24px;
	padding-left: 6px;
	display: flex;
	align-items: center;
	gap: 6px;
	color: #7c7c7c;
	background: ${DARK};
	border: 1px solid ${LINE};
`;

const SearchButton = styled.div<{ $width: number; $gap: number }>`
	flex: none;
	width: ${p => p.$width}px;
	height: 24px;
	margin-left: ${p => p.$gap}px;
	display: flex;
	align-items: center;
	justify-content: center;
	border: 1px solid ${LINE};
`;

const ViewRow = styled.div`
	flex: none;
	height: 26px;
	padding: 2px 0 0 6px;
	display: flex;
	align-items: center;
`;

const ViewIcon = styled.div`
	flex: none;
	width: 18px;
	height: 18px;
	display: flex;
	align-items: center;
	justify-content: center;
	border: 1px solid ${LINE};
`;

const ViewName = styled.div`
	margin-left: 6px;
`;

const ViewsBox = styled.div`
	flex: none;
	margin-left: auto;
	width: 87px;
	height: 24px;
	padding: 0 7px 0 20px;
	display: flex;
	align-items: center;
	justify-content: space-between;
	color: #7a7a7a;
	border: 1px solid ${LINE};
`;

const Tree = styled.div`
	flex: none;
	height: 700px;
	padding-top: 4px;
	background: ${DARK};
	border: 1px solid ${LINE};
	border-top: 0;
`;

const TreeGroup = styled.div<{ $bg?: string }>`
	margin-bottom: 1px;
	background: ${p => p.$bg ?? "transparent"};
`;

const TreeRow = styled.div<{ $dim?: boolean }>`
	height: 20px;
	padding-bottom: 2px;
	display: flex;
	align-items: center;
	color: ${p => (p.$dim ? "#767676" : "#e4e4e4")};
`;

const TreeArrow = styled.span`
	flex: none;
	width: 25px;
	padding-left: 5px;
	display: flex;
	align-items: center;
`;

const TreeChild = styled.div`
	height: 20px;
	line-height: 18px;
	padding-left: 42px;
	color: #f0f0f0;
`;

const ZoomRow = styled.div`
	flex: none;
	height: 20px;
	padding: 0 4px 0 153px;
	display: flex;
	align-items: center;
`;

const ZoomValue = styled.div`
	flex: none;
	width: 38px;
	color: #6c6c6c;
`;

const MiniSquare = styled.div<{ $size: number }>`
	flex: none;
	width: ${p => p.$size}px;
	height: ${p => p.$size}px;
	margin-top: -2px;
	background: #6a6a6a;
`;

const MiniTrack = styled.div`
	flex: none;
	position: relative;
	width: 64px;
	height: 2px;
	margin: -2px 5px 0 6px;
	background: #3a3a3c;
`;

const MiniThumb = styled.div`
	position: absolute;
	left: 0;
	top: 0;
	width: 17px;
	height: 2px;
	background: #f0f0f0;
	&::after {
		content: "";
		position: absolute;
		right: 0;
		top: -2px;
		width: 4px;
		height: 6px;
		background: #f0f0f0;
	}
`;

const Band = styled.div`
	flex: none;
	height: 8px;
	background: #3a3a3e;
`;

const RecentHead = styled.div`
	flex: none;
	height: 25px;
	padding: 0 10px 2px 12px;
	display: flex;
	align-items: center;
	justify-content: space-between;
`;

const RecentList = styled.div`
	flex: none;
	height: 72px;
	padding: 2px 2px 0;
	background: ${DARK};
	border: 1px solid ${LINE};
`;

const RecentRow = styled.div<{ $active?: boolean }>`
	position: relative;
	height: 16px;
	line-height: 16px;
	padding-left: 31px;
	background: ${p => (p.$active ? "#333335" : "transparent")};
`;

const RecentIcon = styled.span`
	position: absolute;
	left: 5px;
	top: 1px;
`;

const SideCaret = styled.div`
	position: absolute;
	right: 1px;
	top: 476px;
	line-height: 0;
`;
